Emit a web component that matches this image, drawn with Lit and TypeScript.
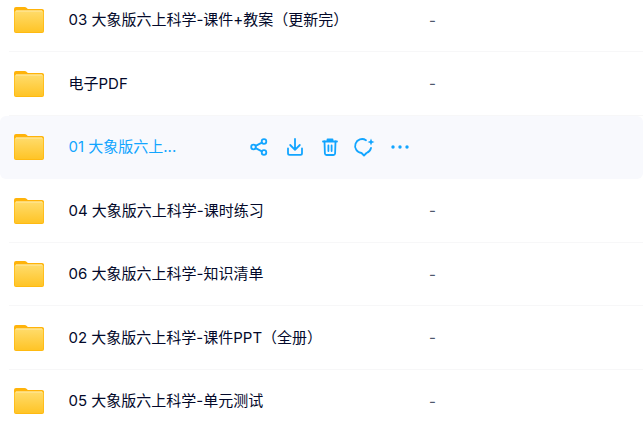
import { LitElement, html, css, svg } from "lit";
import { customElement } from "lit/decorators.js";

const names = [
  "03 大象版六上科学-课件+教案（更新完）",
  "电子PDF",
  "01 大象版六上...",
  "04 大象版六上科学-课时练习",
  "06 大象版六上科学-知识清单",
  "02 大象版六上科学-课件PPT（全册）",
  "05 大象版六上科学-单元测试",
];

const folder = html`<svg class="folder" viewBox="0 0 30 26" width="30" height="26">
  <defs>
    <linearGradient id="fg" x1="0" y1="0" x2="0" y2="1">
      <stop offset="0" stop-color="#ffdc6c" />
      <stop offset="1" stop-color="#ffc426" />
    </linearGradient>
  </defs>
  <path d="M0 2a2 2 0 0 1 2-2h8.500c1 0 1.600.4 2.300 1l1 1H28a2 2 0 0 1 2 2v5H0z" fill="#ffb30a" />
  <rect x="0" y="3" width="30" height="23" rx="2" fill="#ffb70a" />
  <rect x="0.700" y="3.500" width="28.600" height="21.700" rx="1.600" fill="url(#fg)" />
  <rect x="2" y="3.500" width="26" height="1" fill="#ffe9a8" />
</svg>`;

const icons = [
  svg`<circle cx="5.500" cy="11" r="2.300" /><circle cx="16" cy="5.500" r="2.300" /><circle cx="16" cy="16.500" r="2.300" /><path d="M7.600 9.900l6.300-3.300M7.600 12.100l6.300 3.300" />`,
  svg`<path d="M12 3v10.500M7.200 9l4.800 4.800L16.800 9" /><path d="M5 12.500v4.700a1.600 1.600 0 0 0 1.600 1.600h10.800a1.600 1.600 0 0 0 1.600-1.600v-4.700" />`,
  svg`<path d="M5 5.500h14M9.500 5.500V3.500h5v2" /><path d="M6.500 5.500l.4 12a1.700 1.700 0 0 0 1.700 1.500h6.800a1.700 1.700 0 0 0 1.700-1.500l.4-12" /><path d="M10.400 9.500v5.500M13.600 9.500v5.500" />`,
  svg`<path d="M13 4.200A7 7 0 1 0 8.500 17l2.500 2.500 2.500-2.500a7 7 0 0 0 4.500-5" /><path class="fill" d="M18 2.500l1 2.500 2.500 1-2.500 1-1 2.500-1-2.500-2.500-1 2.500-1z" />`,
  svg`<circle class="fill" cx="5" cy="11" r="1.700" /><circle class="fill" cx="12" cy="11" r="1.700" /><circle class="fill" cx="19" cy="11" r="1.700" />`,
];

@customElement("app-root")
export class AppRoot extends LitElement {
  static styles = css`
    :host {
      display: block;
      height: 431px;
      overflow: hidden;
      background: #fff;
      font-family: Inter, "Noto Sans CJK SC", sans-serif;
      font-size: 15px;
      color: #03092a;
    }
    .list {
      margin-top: -11.5px;
    }
    .row {
      height: 63.5px;
      box-sizing: border-box;
      display: flex;
      align-items: center;
      padding-left: 14px;
      position: relative;
    }
    .row::after {
      content: "";
      position: absolute;
      left: 9px;
      right: 0;
      bottom: 0;
      height: 1px;
      background: #f7f7f8;
    }
    .row.active {
      background: #f8f9fd;
      color: #12a5ff;
      border-radius: 6px;
    }
    .row.active::after {
      display: none;
    }
    .folder {
      flex: none;
      margin-right: 24.500px;
    }
    .name {
      width: 360.500px;
      flex: none;
      white-space: nowrap;
      line-height: 20px;
    }
    .active .name {
      width: 179px;
    }
    .size {
      color: #4f586c;
    }
    .actions {
      display: flex;
      gap: 13px;
    }
    .actions svg {
      width: 22px;
      height: 22px;
      fill: none;
      stroke: #12a5ff;
      stroke-width: 1.800;
      stroke-linecap: round;
      stroke-linejoin: round;
    }
    .actions .fill {
      fill: #12a5ff;
      stroke: none;
    }
  `;

  render() {
    return html`<div class="list">
      ${names.map((n, i) =>
        i === 2
          ? html`<div class="row active">
              ${folder}
              <div class="name">${n}</div>
              <div class="actions">
                ${icons.map((p) => html`<svg viewBox="0 0 22 22">${p}</svg>`)}
              </div>
            </div>`
          : html`<div class="row">
              ${folder}
              <div class="name">${n}</div>
              <div class="size">-</div>
            </div>`
      )}
    </div>`;
  }
}
